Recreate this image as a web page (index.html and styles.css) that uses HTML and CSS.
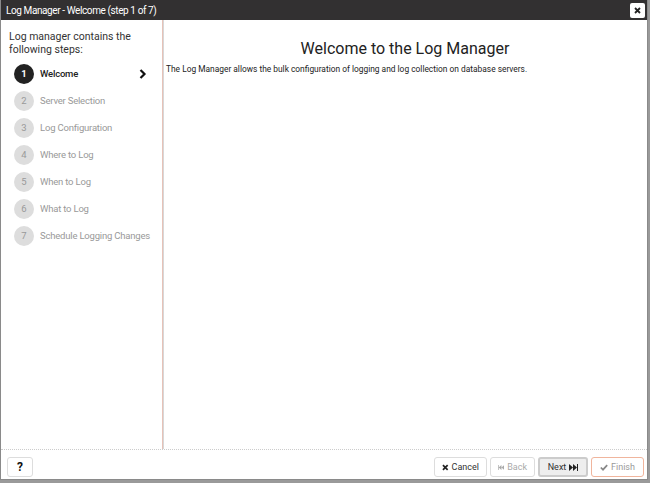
FILE: index.html
```html
<!DOCTYPE html>
<html lang="en">
<head>
    <meta charset="UTF-8">
    <title>Log Manager</title>
    <link rel="stylesheet" href="styles.css">
</head>
<body>

<div class="dialog">
    <div class="title_bar">
        <span class="title_txt">Log Manager - Welcome (step 1 of 7)</span>
        <span class="close_btn">
            <svg width="7" height="7" viewBox="0 0 7 7"><path d="M1 1 L6 6 M6 1 L1 6" stroke="#222" stroke-width="1.8"/></svg>
        </span>
    </div>
    <div class="body_wrap">
        <div class="steps">
            <div class="steps_intro">Log manager contains the following steps:</div>
            <div class="step active"><span class="num">1</span><span class="label">Welcome</span>
                <svg class="chev" width="8" height="10" viewBox="0 0 8 10"><path d="M1.5 1 L5.5 5 L1.5 9" fill="none" stroke="#111" stroke-width="2.2"/></svg>
            </div>
            <div class="step"><span class="num">2</span><span class="label">Server Selection</span></div>
            <div class="step"><span class="num">3</span><span class="label">Log Configuration</span></div>
            <div class="step"><span class="num">4</span><span class="label">Where to Log</span></div>
            <div class="step"><span class="num">5</span><span class="label">When to Log</span></div>
            <div class="step"><span class="num">6</span><span class="label">What to Log</span></div>
            <div class="step"><span class="num">7</span><span class="label">Schedule Logging Changes</span></div>
        </div>
        <div class="content">
            <h1 class="heading">Welcome to the Log Manager</h1>
            <p class="intro">The Log Manager allows the bulk configuration of logging and log collection on database servers.</p>
        </div>
    </div>
    <div class="footer">
        <span class="btn help">?</span>
        <div class="actions">
            <span class="btn cancel">
                <svg width="7" height="7" viewBox="0 0 7 7"><path d="M1 1 L6 6 M6 1 L1 6" stroke="#222" stroke-width="1.8"/></svg>
                Cancel</span>
            <span class="btn disabled">
                <svg width="9" height="7" viewBox="0 0 9 7"><path d="M0 0 H1 V7 H0 Z M5 0 L1 3.5 L5 7 Z M9 0 L5 3.5 L9 7 Z" fill="#aaa"/></svg>
                Back</span>
            <span class="btn next">Next
                <svg width="9" height="7" viewBox="0 0 9 7"><path d="M0 0 L4 3.5 L0 7 Z M4 0 L8 3.5 L4 7 Z M8 0 H9 V7 H8 Z" fill="#222"/></svg>
            </span>
            <span class="btn finish">
                <svg width="8" height="7" viewBox="0 0 8 7"><path d="M0.8 3.5 L3 5.7 L7.2 1.2" fill="none" stroke="#888" stroke-width="1.7"/></svg>
                Finish</span>
        </div>
    </div>
</div>

</body>
</html>
```

FILE: styles.css
```css
html, body {
    margin: 0;
    padding: 0;
}

body {
    width: 650px;
    height: 483px;
    background-color: #9a9a9a;
    font-family: Roboto, "Liberation Sans", sans-serif;
    overflow: hidden;
}

.dialog {
    width: 646px;
    height: 479px;
    background-color: #fff;
    border: 1px solid #8a8a8a;
    border-top: none;
    display: flex;
    flex-direction: column;
}

.title_bar {
    height: 20px;
    background-color: #323031;
    color: #fff;
    display: flex;
    align-items: center;
    justify-content: space-between;
    padding: 0 2px 0 5px;
    font-size: 10px;
    letter-spacing: -0.4px;
}

.close_btn {
    width: 15px;
    height: 15px;
    background-color: #fff;
    border-radius: 2px;
    display: flex;
    align-items: center;
    justify-content: center;
}

.body_wrap {
    flex: 1;
    display: flex;
}

.steps {
    width: 162px;
    border-right: 1px solid #e7c2b8;
    box-shadow: 1px 0 0 #d8d8d8;
    padding: 10px 15px 0 8px;
    box-sizing: border-box;
}

.steps_intro {
    font-size: 10.5px;
    line-height: 13px;
    color: #333;
    width: 130px;
    margin-bottom: 4px;
}

.step {
    height: 27px;
    display: flex;
    align-items: center;
    font-size: 9.5px;
    letter-spacing: -0.2px;
    color: #999;
    white-space: nowrap;
}

.num {
    flex-shrink: 0;
    width: 20px;
    height: 20px;
    border-radius: 50%;
    background-color: #ddd;
    color: #999;
    display: flex;
    align-items: center;
    justify-content: center;
    margin: 0 6px 0 5px;
    font-size: 9.5px;
    letter-spacing: 0;
}

.step.active {
    color: #222;
    font-weight: 500;
}

.step.active .num {
    background-color: #222;
    color: #fff;
    font-weight: bold;
}

.chev {
    margin-left: auto;
}

.content {
    flex: 1;
    padding: 0 3px;
}

.heading {
    margin: 19px 0 6px;
    text-align: center;
    font-size: 16px;
    font-weight: normal;
    color: #222;
}

.intro {
    margin: 0;
    font-size: 8.4px;
    color: #222;
}

.footer {
    height: 27px;
    border-top: 1px dotted #ccc;
    display: flex;
    align-items: flex-end;
    justify-content: space-between;
    padding: 0 3px 2px 6px;
    box-sizing: content-box;
}

.btn {
    height: 18px;
    border: 1px solid #ddd;
    border-radius: 3px;
    display: inline-flex;
    align-items: center;
    justify-content: center;
    gap: 3px;
    font-size: 9px;
    color: #333;
    padding: 0 7px;
    box-sizing: content-box;
}

.help {
    width: 10px;
    font-weight: bold;
    font-size: 12px;
    color: #111;
}

.actions {
    display: flex;
    gap: 3px;
}

.cancel {
    width: 37px;
}

.disabled {
    color: #aaa;
    width: 29px;
}

.next {
    width: 32px;
    background-color: #eee;
    border: 2px solid #ccc;
    height: 16px;
}

.finish {
    width: 37px;
    color: #999;
    border-color: #f0b59d;
}
```
